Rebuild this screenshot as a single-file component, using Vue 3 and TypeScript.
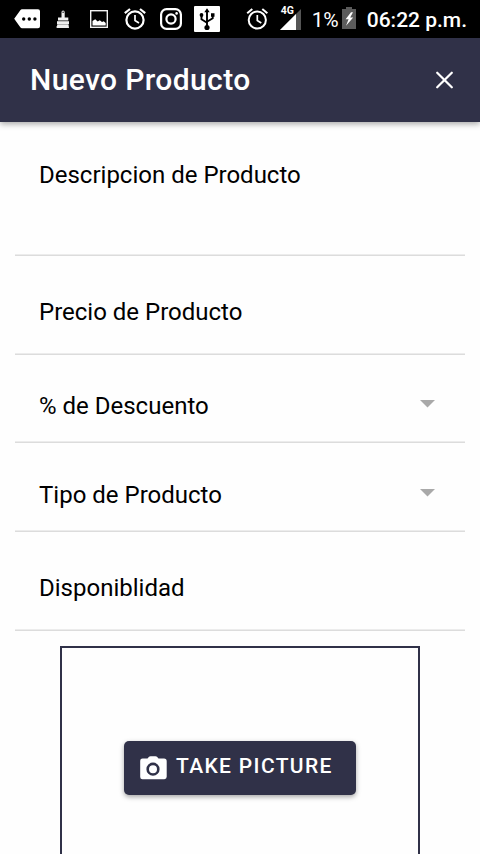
<script setup lang="ts">
interface Field {
  label: string
  kind: 'area' | 'text' | 'select'
}

const fields: Field[] = [
  { label: 'Descripcion de Producto', kind: 'area' },
  { label: 'Precio de Producto', kind: 'text' },
  { label: '% de Descuento', kind: 'select' },
  { label: 'Tipo de Producto', kind: 'select' },
  { label: 'Disponiblidad', kind: 'text' },
]
</script>

<template>
  <div class="screen">
    <div class="status">
      <div class="notifications">
        <svg width="26" height="20" viewBox="0 0 26 20">
          <path d="M8 .3h16a2 2 0 0 1 2 2v15a2 2 0 0 1-2 2H8q-1 0-1.700-1L.2 9.800 6.300 1.300Q7 .3 8 .3z" fill="#fff" />
          <g fill="#000"><circle cx="9.700" cy="10" r="1.700" /><circle cx="15.300" cy="10" r="1.700" /><circle cx="20.900" cy="10" r="1.700" /></g>
        </svg>
        <svg class="brush" width="14" height="19" viewBox="0 0 14 19" fill="#eee">
          <path d="M5.500 2.200a1.600 1.600 0 0 1 3.200 0V7.500h3.600v3H2V7.500h3.500z" />
          <path d="M1 11.200h12v2.800H1z" />
          <path d="M1.300 14.300h11.200l.5 3.700H1L.2 17.100q1.100-.9 1.100-2.800z" />
          <circle cx="7.100" cy="2.300" r=".7" fill="#000" />
        </svg>
        <svg class="gallery" width="18" height="18" viewBox="0 0 18 18">
          <rect x=".7" y=".7" width="16.600" height="16.600" fill="none" stroke="#f2f2f2" stroke-width="1.400" />
          <path d="M2.500 15.500v-4.500l2.700-1.800 2.500 2.300 2.100-1.300 2.200 1.800 1.700-.8 2 1.800v2.500z" fill="#fff" />
        </svg>
        <svg class="alarm" width="22" height="22" viewBox="0 0 22 22" fill="none" stroke="#fff">
          <circle cx="11" cy="12" r="8.600" stroke-width="2.200" />
          <path d="M11 7v5.500l4 2.400" stroke-width="1.700" />
          <path d="M.8 5.200 6 1M21.200 5.200 16 1" stroke-width="2.200" />
        </svg>
        <svg class="insta" width="22" height="22" viewBox="0 0 22 22" fill="none" stroke="#fff" stroke-width="2.200">
          <rect x="1.100" y="1.100" width="19.800" height="19.800" rx="5.500" />
          <circle cx="11" cy="11" r="4.600" />
          <circle cx="16.600" cy="5.400" r="1.300" fill="#fff" stroke="none" />
        </svg>
        <svg class="usb" width="26" height="26" viewBox="0 0 26 26">
          <rect width="26" height="26" rx="1" fill="#fff" />
          <path d="M13 20V5M7.500 9.500v3.800l5.500 3.500M18.700 9v3.300L13 15.800" fill="none" stroke="#000" stroke-width="1.900" />
          <path d="M13 2.300 15.700 6.300H10.300zM17 7.200h3.500v3.500H17z" />
          <circle cx="7.500" cy="9" r="1.900" /><circle cx="13" cy="21.500" r="2.600" />
        </svg>
      </div>
      <div class="system">
        <svg width="22" height="22" viewBox="0 0 22 22" fill="none" stroke="#fff">
          <circle cx="11.300" cy="12" r="8.600" stroke-width="2" />
          <path d="M11.300 7v5.500l4 2.400" stroke-width="1.700" />
          <path d="M1.200 5.200 6.300 1M21.400 5.200 16.300 1" stroke-width="2" />
        </svg>
        <div class="signal">
          <svg width="21" height="21" viewBox="0 0 21 21">
            <path d="M21 0v21H0z" fill="#555" /><path d="M16 5v16H0z" fill="#fff" />
          </svg>
          <span class="network">4G</span>
        </div>
        <span class="percent">1%</span>
        <svg class="battery" width="14" height="22" viewBox="0 0 14 22">
          <path d="M4 0h6v2H14V22H0V2h4z" fill="#5b5b5b" />
          <path d="M9 5.300 3.600 12.300h3L4 18.800 11.200 10.500H8.200L11 5.300z" fill="#fff" />
        </svg>
        <span class="time">06:22 p.m.</span>
      </div>
    </div>

    <header class="toolbar">
      <h1>Nuevo Producto</h1>
      <button class="close" aria-label="Cerrar">
        <svg width="17" height="18" viewBox="0 0 17 18"><path d="M1.200 1.700 15.800 16.300M15.800 1.700 1.200 16.300" stroke="#fff" stroke-width="2.200" stroke-linecap="round" /></svg>
      </button>
    </header>

    <main>
      <div v-for="field in fields" :key="field.label" class="field" :class="field.kind">
        <label>{{ field.label }}</label>
        <svg v-if="field.kind === 'select'" class="caret" width="15" height="8" viewBox="0 0 15 8"><path d="M0 0h15L7.500 7.500z" fill="#a9a9a9" /></svg>
      </div>
      <section class="photo">
        <button class="take">
          <svg width="27" height="24" viewBox="0 0 27 24">
            <path d="M2.500 2.500h5L9 .8Q9.500.2 10.500.2h5q1 0 1.500.6L18.500 2.500h5.500a2.700 2.700 0 0 1 2.700 2.700V20.800A2.500 2.500 0 0 1 24 23.300H2.500A2.300 2.300 0 0 1 .2 21V4.800A2.300 2.300 0 0 1 2.500 2.500z" fill="#fff" />
            <circle cx="13" cy="13.200" r="5.300" fill="#fff" stroke="#303148" stroke-width="2.600" />
          </svg>
          <span>TAKE PICTURE</span>
        </button>
      </section>
    </main>
  </div>
</template>

<style>
body {
  overflow: hidden;
}
</style>

<style scoped>
.screen {
  display: flex;
  flex-direction: column;
  height: 854px;
  overflow: hidden;
  background: #fefefe;
  font-family: Roboto, sans-serif;
  color: #000;
}
svg {
  display: block;
  flex: none;
}
button {
  margin: 0;
  padding: 0;
  border: 0;
  background: none;
  font: inherit;
  color: #fff;
}
.status {
  display: flex;
  flex: none;
  justify-content: space-between;
  height: 38px;
  padding: 0 13px 0 14px;
  box-sizing: border-box;
  background: #000;
  color: #fff;
}
.notifications,
.system {
  display: flex;
  align-items: center;
}
.brush { margin-left: 16px; }
.gallery { margin-left: 20px; }
.alarm { margin-left: 16px; }
.insta { margin-left: 14px; }
.usb { margin-left: 12px; }
.signal {
  position: relative;
  margin-left: 12px;
}
.network {
  position: absolute;
  left: 1px;
  top: -4px;
  font-size: 10.500px;
  line-height: 12px;
  font-weight: 700;
}
.percent {
  margin: 2px 0 0 11px;
  width: 30px;
  font-size: 21px;
  letter-spacing: -0.400px;
  white-space: nowrap;
}
.battery { margin: -2px 11px 0 0; }
.time {
  margin-top: 2px;
  font-size: 21px;
  font-weight: 500;
  white-space: nowrap;
}
.toolbar {
  position: relative;
  display: flex;
  flex: none;
  align-items: center;
  justify-content: space-between;
  height: 84px;
  padding: 0 27px 0 30px;
  box-sizing: border-box;
  background: #303148;
  box-shadow: 0 2px 6px rgba(0, 0, 0, 0.350);
  color: #fff;
}
h1 {
  margin: 0;
  font-size: 30px;
  font-weight: 500;
  line-height: 36px;
  letter-spacing: 0.375px;
}
main {
  flex: 1;
  min-height: 0;
}
.field {
  display: flex;
  justify-content: space-between;
  margin: 0 15px;
  padding: 0 30px 0 24px;
  box-sizing: border-box;
  border-bottom: 1px solid #dcdcdc;
  box-shadow: inset 0 -1px #ececec;
  font-size: 24px;
  line-height: 28px;
}
.area {
  height: 134px;
  padding-top: 39px;
}
.text {
  height: 99px;
  padding-top: 42px;
}
.select {
  height: 88px;
  padding-top: 37px;
}
.select + .select {
  height: 89px;
  padding-top: 38px;
}
.caret { margin-top: 8px; }
.photo {
  display: flex;
  align-items: center;
  justify-content: center;
  width: 360px;
  height: 244px;
  margin: 15px auto 0;
  box-sizing: border-box;
  border: 2px solid #303148;
}
.take {
  display: flex;
  align-items: center;
  width: 232px;
  height: 54px;
  padding-left: 16px;
  border-radius: 5px;
  background: #303148;
  box-shadow: 0 2px 5px rgba(0, 0, 0, 0.350);
}
.take span {
  margin: -4px 0 0 9px;
  font-size: 21px;
  font-weight: 500;
  letter-spacing: 1.350px;
  white-space: nowrap;
}
</style>
